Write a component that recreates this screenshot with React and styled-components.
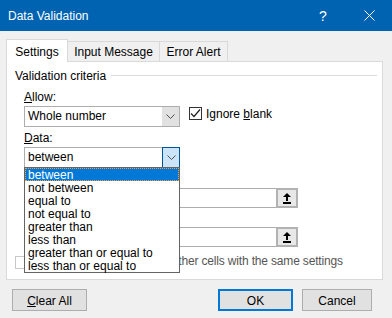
import React from 'react';
import styled, { createGlobalStyle } from 'styled-components';

const FONT = '"Liberation Sans", Arial, sans-serif';

const Global = createGlobalStyle`
  html, body { margin: 0; padding: 0; background: #f0f0f0; }
  #root { width: 392px; height: 318px; overflow: hidden; }
  *, *::before, *::after { box-sizing: border-box; }
`;

const Window = styled.div`
  width: 392px;
  height: 318px;
  background: #f0f0f0;
  font-family: ${FONT};
  font-size: 12px;
  color: #000;
  display: flex;
  flex-direction: column;
  overflow: hidden;
`;

const TitleBar = styled.div`
  height: 31px;
  flex: none;
  background: #0063b1;
  color: #fff;
  display: flex;
  align-items: center;
  padding-left: 8px;
`;

const Title = styled.div`
  flex: 1;
  line-height: 16px;
  padding-top: 1px;
`;

const TitleButton = styled.div`
  width: 46px;
  height: 31px;
  display: flex;
  align-items: center;
  justify-content: center;
  font-size: 14px;
  line-height: 16px;
`;

const Body = styled.div`
  padding: 8px 9px 0 6px;
  display: flex;
  flex-direction: column;
`;

const TabStrip = styled.div`
  display: flex;
  align-items: flex-start;
  height: 23px;
  margin-bottom: -1px;
  position: relative;
  z-index: 1;
`;

const Tab = styled.div`
  width: ${(p) => p.$w}px;
  height: ${(p) => (p.$active ? 23 : 20)}px;
  margin-top: ${(p) => (p.$active ? 0 : 2)}px;
  background: ${(p) => (p.$active ? '#fff' : '#f0f0f0')};
  border: 1px solid #d9d9d9;
  border-bottom: none;
  border-left: ${(p) => (p.$first ? '1px solid #d9d9d9' : 'none')};
  text-align: center;
  line-height: 16px;
  padding-top: ${(p) => (p.$active ? 4 : 2)}px;
`;

const Panel = styled.div`
  height: 219px;
  background: #fff;
  border: 1px solid #d9d9d9;
  padding: 5px 5px 0 8px;
  display: flex;
  flex-direction: column;
`;

const SectionHeader = styled.div`
  display: flex;
  align-items: center;
  height: 16px;
  line-height: 16px;
  padding-top: 1px;
`;

const Rule = styled.div`
  flex: 1;
  height: 1px;
  background: #dcdcdc;
  margin-left: 5px;
`;

const Indent = styled.div`
  padding-left: 9px;
  margin-top: 5px;
  display: flex;
  flex-direction: column;
  align-items: flex-start;
`;

const FieldLabel = styled.div`
  height: 16px;
  line-height: 16px;
  padding-top: 1px;
  margin-top: ${(p) => p.$mt || 0}px;
`;

const Key = styled.span`
  text-decoration: underline;
  text-underline-offset: 1px;
`;

const Row = styled.div`
  display: flex;
  align-items: flex-start;
  margin-top: 2px;
`;

const Combo = styled.div`
  width: 156px;
  height: 21px;
  border: 1px solid #adadad;
  background: #fff;
  display: flex;
  position: relative;
`;

const ComboText = styled.div`
  flex: 1;
  padding-left: 3px;
  line-height: 18px;
  white-space: nowrap;
`;

const ComboButton = styled.div`
  width: ${(p) => (p.$open ? 18 : 17)}px;
  margin: ${(p) => (p.$open ? '-1px -1px -1px 0' : '0')};
  background: ${(p) => (p.$open ? '#cce4f7' : '#e1e1e1')};
  border: ${(p) => (p.$open ? '1px solid #005499' : 'none')};
  display: flex;
  align-items: center;
  justify-content: center;
`;

const CheckRow = styled.label`
  display: flex;
  align-items: flex-start;
  gap: ${(p) => p.$gap || 4}px;
  margin-left: ${(p) => p.$ml || 0}px;
  margin-top: ${(p) => p.$mt || 0}px;
  line-height: 17px;
  color: ${(p) => p.$color || '#000'};
  letter-spacing: ${(p) => p.$ls || 0}px;
  white-space: nowrap;
`;

const Box = styled.span`
  width: 13px;
  height: 13px;
  flex: none;
  border: 1px solid ${(p) => p.$border || '#333'};
  background: #fff;
  margin-top: ${(p) => p.$mt || 0}px;
  display: flex;
  align-items: center;
  justify-content: center;
`;

const List = styled.div`
  position: absolute;
  left: -1px;
  top: 19px;
  width: 156px;
  background: #fff;
  border: 1px solid #646464;
  z-index: 5;
`;

const ListItem = styled.div`
  height: 13px;
  line-height: 12px;
  padding-left: 2px;
  white-space: nowrap;
  border: 1px dotted ${(p) => (p.$active ? '#f7a13a' : 'transparent')};
  background: ${(p) => (p.$active ? '#0078d7' : '#fff')};
  color: ${(p) => (p.$active ? '#fff' : '#000')};
`;

const InputBox = styled.div`
  width: 274px;
  height: 20px;
  margin-top: 2px;
  border: 1px solid #adadad;
  background: #fff;
  display: flex;
  justify-content: flex-end;
`;

const RefButton = styled.div`
  width: 22px;
  height: 20px;
  margin: -1px -1px -1px 0;
  border: 2px solid #b2b2b2;
  background: #e8e8e8;
  display: flex;
  align-items: center;
  justify-content: center;
`;

const Footer = styled.div`
  display: flex;
  align-items: center;
  margin-top: 9px;
  padding: 0 11px 0 6px;
`;

const Button = styled.div`
  width: ${(p) => p.$w}px;
  height: 22px;
  background: #e1e1e1;
  border: ${(p) => (p.$default ? '2px solid #0078d7' : '1px solid #adadad')};
  display: flex;
  align-items: center;
  justify-content: center;
  line-height: 16px;
  padding-top: 1px;
  margin-left: ${(p) => p.$ml || 0}px;
`;

const Spacer = styled.div`
  flex: 1;
`;

const Chevron = () => (
  <svg width="9" height="5" viewBox="0 0 9 5">
    <path d="M0.5 0.5 L4.5 4.5 L8.5 0.5" fill="none" stroke="#505050" strokeWidth="1" />
  </svg>
);

const Check = () => (
  <svg width="11" height="11" viewBox="0 0 11 11">
    <path d="M1 5.5 L4 8.5 L10 1.5" fill="none" stroke="#222" strokeWidth="1.2" />
  </svg>
);

const RefIcon = () => (
  <svg width="8" height="11" viewBox="0 0 8 11">
    <path d="M4 0 L8 4 L5 4 L5 8 L3 8 L3 4 L0 4 Z" fill="#000" />
    <rect x="0" y="9" width="8" height="2" fill="#000" />
  </svg>
);

const CloseIcon = () => (
  <svg width="11" height="11" viewBox="0 0 11 11">
    <path d="M0.5 0.5 L10.5 10.5 M10.5 0.5 L0.5 10.5" stroke="#fff" strokeWidth="1" />
  </svg>
);

const options = [
  'between',
  'not between',
  'equal to',
  'not equal to',
  'greater than',
  'less than',
  'greater than or equal to',
  'less than or equal to',
];

export default function App() {
  return (
    <>
      <Global />
      <Window>
        <TitleBar>
          <Title>Data Validation</Title>
          <TitleButton>?</TitleButton>
          <TitleButton>
            <CloseIcon />
          </TitleButton>
        </TitleBar>
        <Body>
          <TabStrip>
            <Tab $active $first $w={62}>Settings</Tab>
            <Tab $w={92}>Input Message</Tab>
            <Tab $w={68}>Error Alert</Tab>
          </TabStrip>
          <Panel>
            <SectionHeader>
              <span>Validation criteria</span>
              <Rule />
            </SectionHeader>
            <Indent>
              <FieldLabel>
                <Key>A</Key>llow:
              </FieldLabel>
              <Row>
                <Combo>
                  <ComboText>Whole number</ComboText>
                  <ComboButton>
                    <Chevron />
                  </ComboButton>
                </Combo>
                <CheckRow $ml={9} $mt={0}>
                  <Box $mt={1}>
                    <Check />
                  </Box>
                  <span>
                    Ignore <Key>b</Key>lank
                  </span>
                </CheckRow>
              </Row>
              <FieldLabel $mt={2}>
                <Key>D</Key>ata:
              </FieldLabel>
              <Row>
                <Combo>
                  <ComboText>between</ComboText>
                  <ComboButton $open>
                    <Chevron />
                  </ComboButton>
                  <List>
                    {options.map((o, i) => (
                      <ListItem key={o} $active={i === 0}>
                        {o}
                      </ListItem>
                    ))}
                  </List>
                </Combo>
              </Row>
              <FieldLabel $mt={2}>
                <Key>M</Key>inimum:
              </FieldLabel>
              <InputBox>
                <RefButton>
                  <RefIcon />
                </RefButton>
              </InputBox>
              <FieldLabel $mt={1}>
                Ma<Key>x</Key>imum:
              </FieldLabel>
              <InputBox>
                <RefButton>
                  <RefIcon />
                </RefButton>
              </InputBox>
            </Indent>
            <CheckRow $gap={5} $mt={6} $color="#555" $ls={-0.17}>
              <Box $mt={3} $border="#c8c8c8" />
              <span>
                Apply these changes to all other cells with the same settings
              </span>
            </CheckRow>
          </Panel>
          <Footer>
            <Button $w={75}>
              <span>
                <Key>C</Key>lear All
              </span>
            </Button>
            <Spacer />
            <Button $w={75} $default>
              OK
            </Button>
            <Button $w={70} $ml={9}>
              Cancel
            </Button>
          </Footer>
        </Body>
      </Window>
    </>
  );
}
